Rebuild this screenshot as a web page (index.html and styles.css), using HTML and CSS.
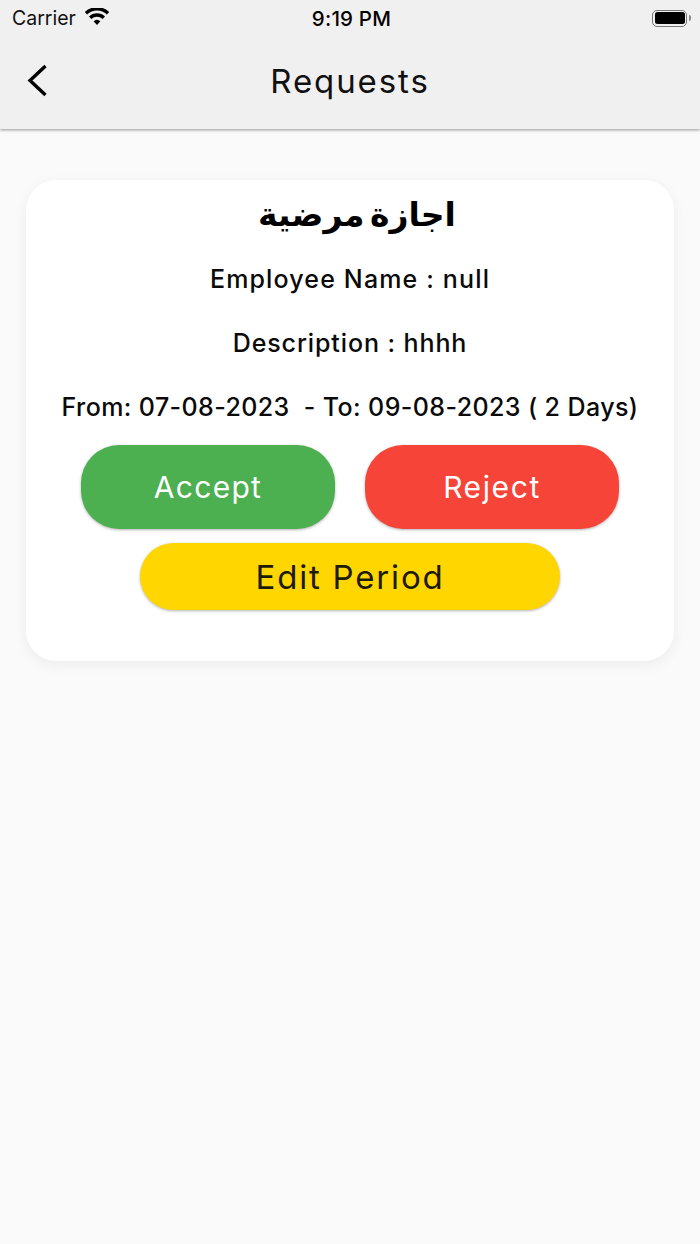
FILE: index.html
```html
<!DOCTYPE html>
<html lang="en">
<head>
<meta charset="utf-8">
<title>Requests</title>
<link rel="stylesheet" href="styles.css">
</head>
<body>
<div class="header">
  <div class="statusbar">
    <div class="status-left">
      <span class="carrier">Carrier</span>
      <svg class="wifi" width="26" height="18" viewBox="0 0 26 18">
        <path d="M13 17 L9.6 13.3 A5 5 0 0 1 16.4 13.3 Z" fill="#000"/>
        <path d="M7.4 11 L5 8.4 A11.6 11.6 0 0 1 21 8.4 L18.6 11 A8.2 8.2 0 0 0 7.4 11 Z" fill="#000"/>
        <path d="M3.1 6.4 L0.8 3.9 A18 18 0 0 1 25.2 3.9 L22.9 6.4 A14.6 14.6 0 0 0 3.1 6.4 Z" fill="#000"/>
      </svg>
    </div>
    <span class="clock">9:19 PM</span>
    <div class="status-right">
      <span class="battery"><span class="battery-fill"></span></span>
      <span class="battery-tip"></span>
    </div>
  </div>
  <div class="appbar">
    <svg class="back" width="24" height="36" viewBox="0 0 24 36">
      <path d="M22.5 3 L7 17.5 L22.5 32" fill="none" stroke="#000" stroke-width="3.4"/>
    </svg>
    <h1 class="title">Requests</h1>
  </div>
</div>

<div class="content">
  <div class="card">
    <h2 class="card-title" lang="ar" dir="rtl">اجازة مرضية</h2>
    <p class="line line-name">Employee Name : null</p>
    <p class="line line-desc">Description : hhhh</p>
    <p class="line line-date">From: 07-08-2023&nbsp; - To: 09-08-2023 ( 2 Days)</p>
    <div class="actions">
      <button class="btn btn-accept">Accept</button>
      <button class="btn btn-reject">Reject</button>
    </div>
    <button class="btn btn-edit">Edit Period</button>
  </div>
</div>
</body>
</html>
```
FILE: styles.css
```css
html, body { margin: 0; padding: 0; height: 100%; }
body {
  background: #fafafa;
  color: #000;
  font-family: "Inter", "Open Sans", sans-serif;
}

.header {
  background: #f0f0f0;
  height: 129px;
  box-shadow: 0 1px 3px rgba(0,0,0,0.4);
}
.statusbar {
  height: 36px;
  display: grid;
  grid-template-columns: 1fr auto 1fr;
  align-items: center;
  padding: 0 9px 0 12px;
}
.status-left { display: flex; align-items: center; gap: 8px; }
.carrier { font-size: 19.5px; color: #111; }
.wifi { margin-top: -3px; }
.clock { font-size: 20.5px; font-weight: 500; letter-spacing: 0.2px; }
.status-right { display: flex; justify-content: flex-end; align-items: center; }
.battery {
  border: 1.5px solid #777;
  border-radius: 5px;
  padding: 1.5px;
  display: flex;
  width: 30px;
  height: 12px;
}
.battery-fill { flex: 1; background: #000; border-radius: 2.5px; }
.battery-tip { width: 2px; height: 6px; background: #888; border-radius: 0 2px 2px 0; margin-left: 2px; }

.appbar {
  height: 93px;
  display: flex;
  align-items: center;
  justify-content: center;
  position: relative;
}
.back { position: absolute; left: 23px; top: 27px; }
.title {
  margin: 0 0 3px;
  font-size: 33px;
  font-weight: 400;
  letter-spacing: 1.9px;
  color: #111;
}

.content { padding: 51px 26px 0; }
.card {
  background: #fff;
  border-radius: 30px;
  height: 481px;
  box-shadow: 0 4px 14px rgba(0,0,0,0.06);
  display: flex;
  flex-direction: column;
  align-items: center;
}
.card-title {
  margin: 0 0 0 14px;
  height: 67px;
  line-height: 69px;
  font-family: "DejaVu Sans", sans-serif;
  font-size: 33px;
  font-weight: 700;
  word-spacing: -6px;
}
.line {
  margin: 0;
  height: 64px;
  line-height: 64px;
  font-size: 25px;
  font-weight: 500;
  color: #0a0a0a;
  white-space: nowrap;
}
.line-name { letter-spacing: 1.15px; }
.line-desc { letter-spacing: 0.9px; }
.line-date { letter-spacing: 0.4px; }

.btn {
  display: block;
  border: none;
  padding: 0;
  font-family: inherit;
  font-weight: 400;
  box-shadow: 0 1px 3px rgba(0,0,0,0.3);
}
.actions { display: flex; gap: 30px; margin-top: 6px; }
.btn-accept, .btn-reject {
  width: 254px;
  height: 84px;
  border-radius: 38px;
  color: #fff;
  font-size: 30px;
}
.btn-accept { background: #4caf50; letter-spacing: 1.3px; }
.btn-reject { background: #f64439; letter-spacing: 1.6px; }
.btn-edit {
  width: 420px;
  height: 67px;
  margin-top: 14px;
  border-radius: 34px;
  background: #ffd600;
  color: #1d1a05;
  font-size: 33px;
  letter-spacing: 1.8px;
}
```
